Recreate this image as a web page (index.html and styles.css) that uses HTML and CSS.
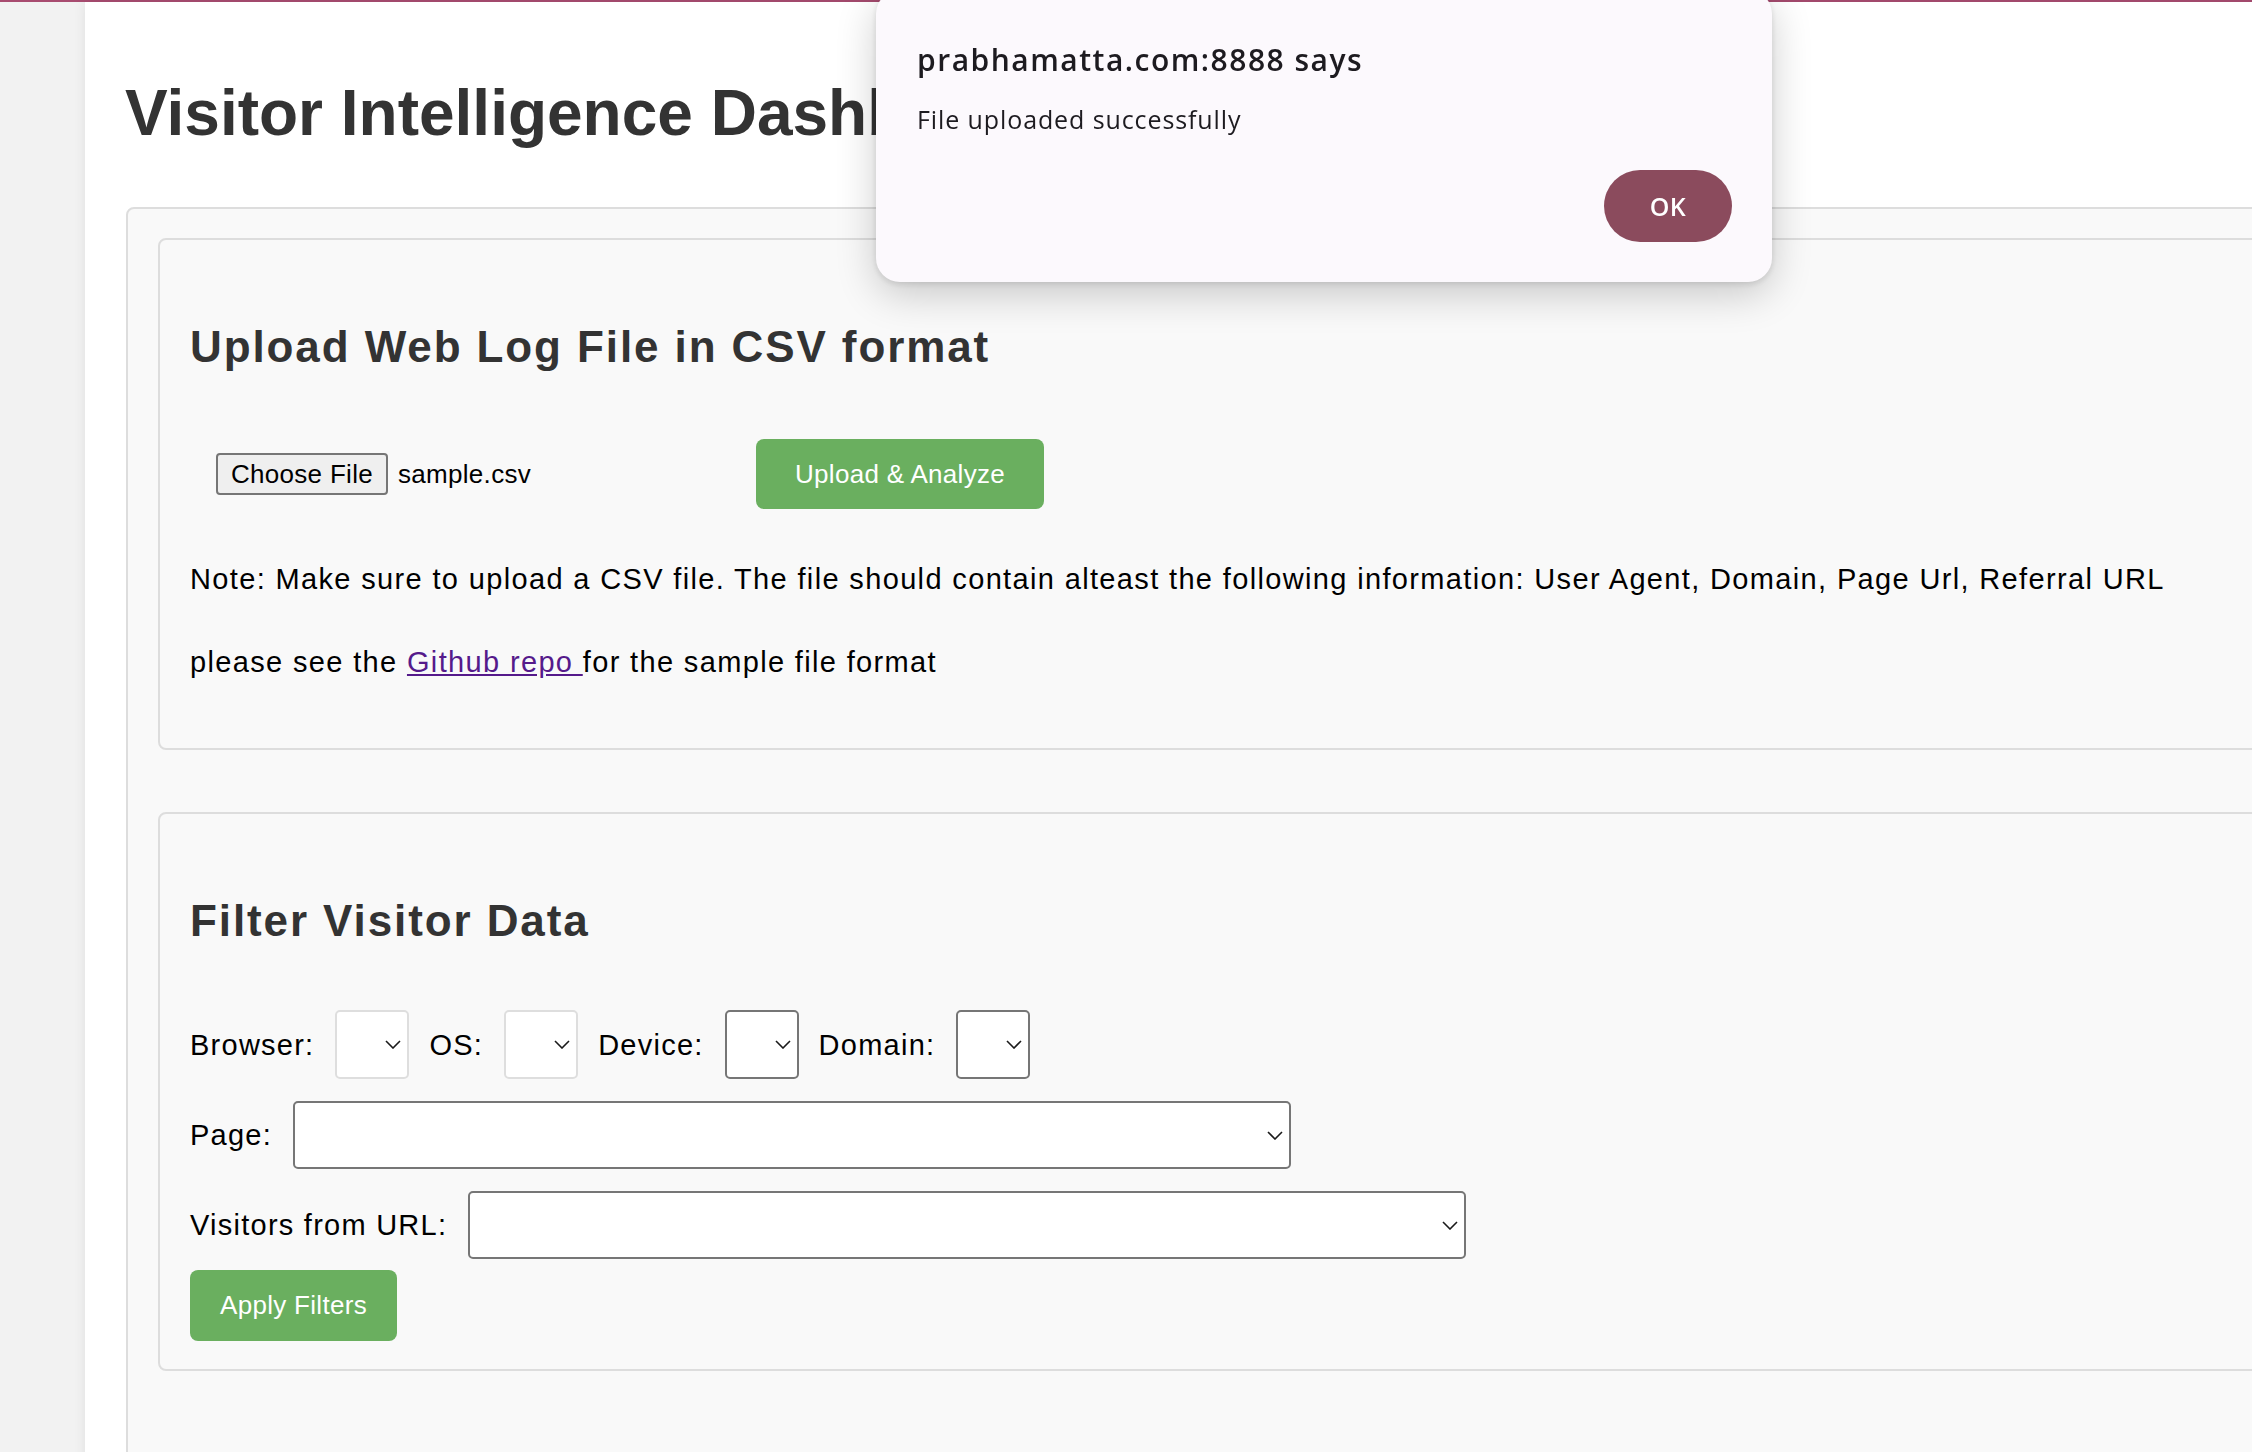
FILE: index.html
```html
<!DOCTYPE html>
<html lang="en">
<head>
<meta charset="utf-8">
<title>Visitor Intelligence Dashboard</title>
<link rel="stylesheet" href="styles.css">
</head>
<body>
<div class="topline"></div>
<main class="container">
  <h1 class="title">Visitor Intelligence Dashboard</h1>
  <div class="outer">
    <section class="panel upload-panel">
      <h2 class="panel-title">Upload Web Log File in CSV format</h2>
      <div class="upload-row">
        <div class="file-input"><span class="file-btn">Choose File</span><span class="file-name">sample.csv</span></div>
        <button class="btn btn-upload">Upload &amp; Analyze</button>
      </div>
      <p class="note">Note: Make sure to upload a CSV file. The file should contain alteast the following information: User Agent, Domain, Page Url, Referral URL</p>
      <p class="note note-link">please see the <a href="#">Github repo </a>for the sample file format</p>
    </section>
    <section class="panel filter-panel">
      <h2 class="panel-title">Filter Visitor Data</h2>
      <div class="filter-row row-1">
        <span class="label">Browser:</span>
        <div class="select select-small select-light"><svg class="chev" viewBox="0 0 16 9" width="16" height="9"><polyline points="1,1 8,8 15,1"/></svg></div>
        <span class="label">OS:</span>
        <div class="select select-small select-light"><svg class="chev" viewBox="0 0 16 9" width="16" height="9"><polyline points="1,1 8,8 15,1"/></svg></div>
        <span class="label">Device:</span>
        <div class="select select-small"><svg class="chev" viewBox="0 0 16 9" width="16" height="9"><polyline points="1,1 8,8 15,1"/></svg></div>
        <span class="label">Domain:</span>
        <div class="select select-small"><svg class="chev" viewBox="0 0 16 9" width="16" height="9"><polyline points="1,1 8,8 15,1"/></svg></div>
      </div>
      <div class="filter-row row-2">
        <span class="label">Page:</span>
        <div class="select select-wide"><svg class="chev" viewBox="0 0 16 9" width="16" height="9"><polyline points="1,1 8,8 15,1"/></svg></div>
      </div>
      <div class="filter-row row-3">
        <span class="label">Visitors from URL:</span>
        <div class="select select-wide"><svg class="chev" viewBox="0 0 16 9" width="16" height="9"><polyline points="1,1 8,8 15,1"/></svg></div>
      </div>
      <button class="btn btn-apply">Apply Filters</button>
    </section>
  </div>
</main>
<div class="dialog" role="alertdialog">
  <div class="dialog-title">prabhamatta.com:8888 says</div>
  <div class="dialog-msg">File uploaded successfully</div>
  <div class="dialog-actions"><button class="dialog-ok">OK</button></div>
</div>
</body>
</html>
```
FILE: styles.css
```css
html, body {
  margin: 0;
  padding: 0;
  overflow: hidden;
}
body {
  background: #f2f2f2;
  font-family: "Liberation Sans", Arial, sans-serif;
  color: #000;
}
.topline {
  height: 2px;
  background: #a84c70;
}
.container {
  display: flow-root;
  margin-left: 85px;
  width: 2400px;
  min-height: 1500px;
  background: #fff;
  box-shadow: 0 0 12px rgba(0, 0, 0, 0.08);
  padding-left: 40px;
  box-sizing: border-box;
}
.title {
  margin: 74px 0 57px;
  font-size: 64px;
  line-height: 74px;
  font-weight: bold;
  color: #333;
}
.outer {
  margin-left: 1px;
  border: 2px solid #ddd;
  border-radius: 8px;
  background: #f9f9f9;
  padding: 29px 0 400px 30px;
}
.panel {
  border: 2px solid #ddd;
  border-radius: 8px;
  background: #f9f9f9;
  padding: 30px 0 0 30px;
}
.panel + .panel {
  margin-top: 62px;
}
.upload-panel {
  padding-bottom: 70px;
}
.filter-panel {
  padding-bottom: 28px;
}
.panel-title {
  margin: 53px 0 0;
  font-size: 44px;
  line-height: 48px;
  letter-spacing: 1.9px;
  font-weight: bold;
  color: #333;
}
.upload-row {
  display: flex;
  align-items: center;
  height: 70px;
  margin-top: 68px;
}
.file-input {
  display: flex;
  align-items: center;
  width: 566px;
  padding-left: 26px;
  box-sizing: border-box;
  font-size: 26px;
  letter-spacing: 0.3px;
}
.file-btn {
  display: flex;
  align-items: center;
  justify-content: center;
  box-sizing: border-box;
  width: 172px;
  height: 42px;
  border: 2px solid #767676;
  border-radius: 4px;
  background: #efefef;
}
.file-name {
  margin-left: 10px;
}
.btn {
  display: flex;
  align-items: center;
  justify-content: center;
  border: none;
  border-radius: 8px;
  background: #6aaf5f;
  color: #fff;
  font-family: "Liberation Sans", Arial, sans-serif;
  font-size: 26px;
  letter-spacing: 0.3px;
  padding: 0;
}
.btn-upload {
  width: 288px;
  height: 70px;
}
.note {
  margin: 54px 0 0;
  font-size: 29px;
  line-height: 32px;
  letter-spacing: 1.35px;
}
.note-link {
  margin-top: 51px;
}
.note a {
  color: #551a8b;
  text-decoration: underline;
}
.filter-row {
  display: flex;
  align-items: center;
}
.row-1 {
  margin-top: 65px;
}
.row-2, .row-3 {
  margin-top: 22px;
}
.label {
  font-size: 29px;
  line-height: 32px;
  letter-spacing: 1.25px;
  margin-right: 21px;
}
.select {
  display: flex;
  align-items: center;
  justify-content: flex-end;
  box-sizing: border-box;
  background: #fff;
  border: 2px solid #767676;
  border-radius: 5px;
  padding-right: 6px;
}
.select-small {
  width: 74px;
  height: 69px;
  margin-right: 20px;
}
.select-light {
  border-color: #dedede;
}
.select-wide {
  width: 998px;
  height: 68px;
}
.chev polyline {
  fill: none;
  stroke: #1a1a1a;
  stroke-width: 1.6;
}
.btn-apply {
  margin-top: 11px;
  width: 207px;
  height: 71px;
}
.dialog {
  position: fixed;
  left: 876px;
  top: -10px;
  width: 896px;
  height: 292px;
  box-sizing: border-box;
  padding: 51px 40px 40px 41px;
  background: #fcf9fd;
  border-radius: 24px;
  box-shadow: 0 12px 40px rgba(0, 0, 0, 0.2), 0 2px 6px rgba(0, 0, 0, 0.12);
  display: flex;
  flex-direction: column;
  font-family: "Open Sans", Roboto, sans-serif;
  color: #1d1b20;
}
.dialog-title {
  font-size: 30px;
  font-weight: 600;
  line-height: 38px;
  letter-spacing: 1.5px;
}
.dialog-msg {
  margin-top: 24px;
  font-size: 25px;
  line-height: 32px;
  letter-spacing: 0.9px;
}
.dialog-actions {
  margin-top: auto;
  display: flex;
  justify-content: flex-end;
}
.dialog-ok {
  width: 128px;
  height: 72px;
  border: none;
  border-radius: 36px;
  background: #8b4b5d;
  color: #fff;
  font-family: "Open Sans", Roboto, sans-serif;
  font-size: 25px;
  font-weight: 600;
  letter-spacing: 0.5px;
}
```
